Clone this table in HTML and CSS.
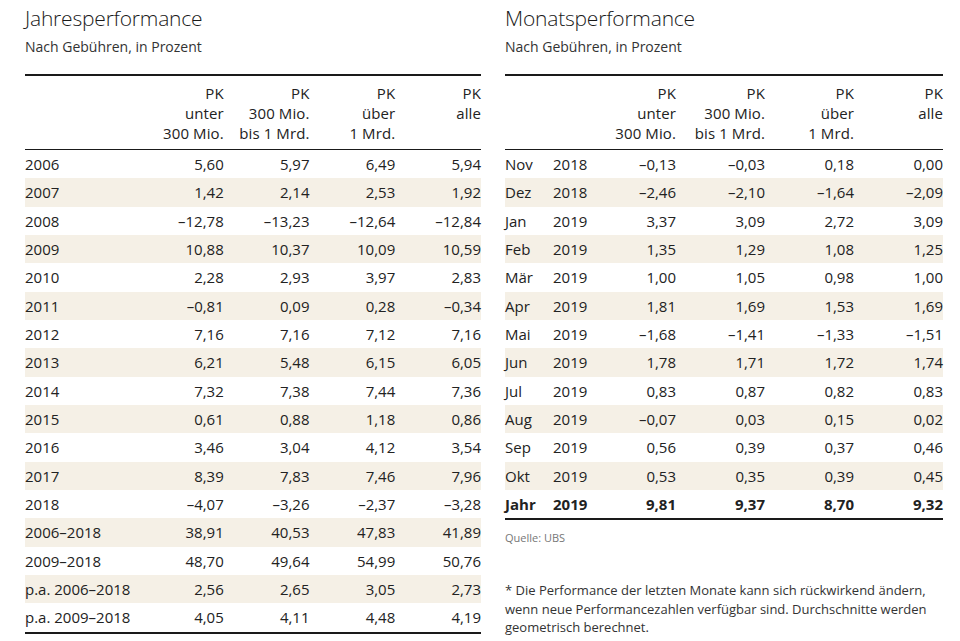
FILE: index.html
```html
<!DOCTYPE html>
<html lang="de">
<head>
<meta charset="utf-8">
<title>Performance</title>
<link rel="stylesheet" href="styles.css">
</head>
<body>
<div class="page">
  <section class="panel panel-year">
    <h1 class="title">Jahresperformance</h1>
    <p class="subtitle">Nach Gebühren, in Prozent</p>
    <table class="perf perf-year">
      <colgroup><col class="c-label"><col class="c-num"><col class="c-num"><col class="c-num"><col class="c-num"></colgroup>
      <thead>
        <tr><th></th><th>PK<br>unter<br>300 Mio.</th><th>PK<br>300 Mio.<br>bis 1 Mrd.</th><th>PK<br>über<br>1 Mrd.</th><th>PK<br>alle</th></tr>
      </thead>
      <tbody>
        <tr><td>2006</td><td>5,60</td><td>5,97</td><td>6,49</td><td>5,94</td></tr>
        <tr><td>2007</td><td>1,42</td><td>2,14</td><td>2,53</td><td>1,92</td></tr>
        <tr><td>2008</td><td>–12,78</td><td>–13,23</td><td>–12,64</td><td>–12,84</td></tr>
        <tr><td>2009</td><td>10,88</td><td>10,37</td><td>10,09</td><td>10,59</td></tr>
        <tr><td>2010</td><td>2,28</td><td>2,93</td><td>3,97</td><td>2,83</td></tr>
        <tr><td>2011</td><td>–0,81</td><td>0,09</td><td>0,28</td><td>–0,34</td></tr>
        <tr><td>2012</td><td>7,16</td><td>7,16</td><td>7,12</td><td>7,16</td></tr>
        <tr><td>2013</td><td>6,21</td><td>5,48</td><td>6,15</td><td>6,05</td></tr>
        <tr><td>2014</td><td>7,32</td><td>7,38</td><td>7,44</td><td>7,36</td></tr>
        <tr><td>2015</td><td>0,61</td><td>0,88</td><td>1,18</td><td>0,86</td></tr>
        <tr><td>2016</td><td>3,46</td><td>3,04</td><td>4,12</td><td>3,54</td></tr>
        <tr><td>2017</td><td>8,39</td><td>7,83</td><td>7,46</td><td>7,96</td></tr>
        <tr><td>2018</td><td>–4,07</td><td>–3,26</td><td>–2,37</td><td>–3,28</td></tr>
        <tr><td>2006–2018</td><td>38,91</td><td>40,53</td><td>47,83</td><td>41,89</td></tr>
        <tr><td>2009–2018</td><td>48,70</td><td>49,64</td><td>54,99</td><td>50,76</td></tr>
        <tr><td>p.a. 2006–2018</td><td>2,56</td><td>2,65</td><td>3,05</td><td>2,73</td></tr>
        <tr><td>p.a. 2009–2018</td><td>4,05</td><td>4,11</td><td>4,48</td><td>4,19</td></tr>
      </tbody>
    </table>
  </section>
  <section class="panel panel-month">
    <h1 class="title">Monatsperformance</h1>
    <p class="subtitle">Nach Gebühren, in Prozent</p>
    <table class="perf perf-month">
      <colgroup><col class="c-month"><col class="c-yr"><col class="c-num"><col class="c-num"><col class="c-num"><col class="c-num"></colgroup>
      <thead>
        <tr><th></th><th></th><th>PK<br>unter<br>300 Mio.</th><th>PK<br>300 Mio.<br>bis 1 Mrd.</th><th>PK<br>über<br>1 Mrd.</th><th>PK<br>alle</th></tr>
      </thead>
      <tbody>
        <tr><td>Nov</td><td>2018</td><td>–0,13</td><td>–0,03</td><td>0,18</td><td>0,00</td></tr>
        <tr><td>Dez</td><td>2018</td><td>–2,46</td><td>–2,10</td><td>–1,64</td><td>–2,09</td></tr>
        <tr><td>Jan</td><td>2019</td><td>3,37</td><td>3,09</td><td>2,72</td><td>3,09</td></tr>
        <tr><td>Feb</td><td>2019</td><td>1,35</td><td>1,29</td><td>1,08</td><td>1,25</td></tr>
        <tr><td>Mär</td><td>2019</td><td>1,00</td><td>1,05</td><td>0,98</td><td>1,00</td></tr>
        <tr><td>Apr</td><td>2019</td><td>1,81</td><td>1,69</td><td>1,53</td><td>1,69</td></tr>
        <tr><td>Mai</td><td>2019</td><td>–1,68</td><td>–1,41</td><td>–1,33</td><td>–1,51</td></tr>
        <tr><td>Jun</td><td>2019</td><td>1,78</td><td>1,71</td><td>1,72</td><td>1,74</td></tr>
        <tr><td>Jul</td><td>2019</td><td>0,83</td><td>0,87</td><td>0,82</td><td>0,83</td></tr>
        <tr><td>Aug</td><td>2019</td><td>–0,07</td><td>0,03</td><td>0,15</td><td>0,02</td></tr>
        <tr><td>Sep</td><td>2019</td><td>0,56</td><td>0,39</td><td>0,37</td><td>0,46</td></tr>
        <tr><td>Okt</td><td>2019</td><td>0,53</td><td>0,35</td><td>0,39</td><td>0,45</td></tr>
        <tr class="total"><td>Jahr</td><td>2019</td><td>9,81</td><td>9,37</td><td>8,70</td><td>9,32</td></tr>
      </tbody>
    </table>
    <p class="source">Quelle: UBS</p>
    <p class="note">* Die Performance der letzten Monate kann sich rückwirkend ändern, wenn neue Performancezahlen verfügbar sind. Durchschnitte werden geometrisch berechnet.</p>
  </section>
</div>
</body>
</html>
```
FILE: styles.css
```css
html, body {
  margin: 0;
  padding: 0;
  background: #ffffff;
}
body {
  font-family: "Open Sans", "Noto Sans", sans-serif;
  color: #222222;
}
.page {
  display: flex;
  gap: 24px;
  padding: 0 0 0 25px;
}
.panel-year { width: 456px; }
.panel-month { width: 438px; }

.title {
  margin: 4px 0 0 0;
  font-size: 21px;
  line-height: 28px;
  font-weight: 300;
  color: #1a1a1a;
  letter-spacing: -0.2px;
}
.subtitle {
  margin: 6px 0 0 0;
  font-size: 14px;
  line-height: 18px;
  color: #333333;
}
.perf {
  width: 100%;
  margin-top: 18px;
  border-collapse: collapse;
  table-layout: fixed;
  font-size: 15px;
}
.perf-year .c-label { width: 113px; }
.perf-month .c-month { width: 48px; }
.perf-month .c-yr { width: 34px; }
.perf thead tr { border-top: 2px solid #1a1a1a; border-bottom: 1px solid #1a1a1a; }
.perf th {
  font-weight: normal;
  text-align: right;
  vertical-align: top;
  padding: 7px 0 6px 0;
  line-height: 20px;
  height: 59px;
  letter-spacing: 0.1px;
}
.perf td {
  height: 28.33px;
  padding: 0;
  text-align: right;
  line-height: 20px;
  white-space: nowrap;
}
.perf td:first-child { text-align: left; }
.perf-month td:nth-child(2) { text-align: left; }
.perf tbody tr:nth-child(even) { background: #f5f0e6; }
.perf tbody { border-bottom: 2.5px solid #1a1a1a; }
.perf .total td { font-weight: bold; }

.source {
  margin: 10px 0 0 0;
  font-size: 11px;
  color: #777777;
}
.note {
  margin: 36px 0 0 0;
  font-size: 13px;
  line-height: 18.5px;
  color: #333333;
}
```
